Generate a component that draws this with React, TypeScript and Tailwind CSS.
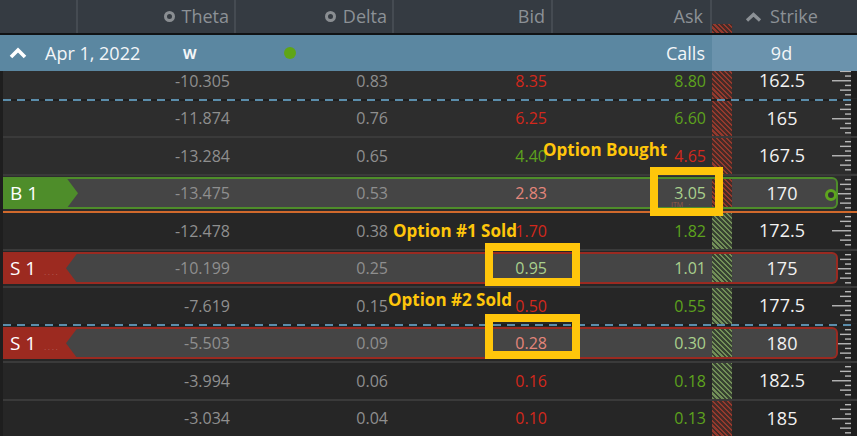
import React from "react";

type Tone = "red" | "green" | "lred" | "lgreen";

type Row = {
  theta: string;
  delta: string;
  bid: string;
  bidTone: Tone;
  ask: string;
  askTone: Tone;
  strike: string;
  hatch: "red" | "green";
  itm: boolean;
  pos?: "B" | "S";
  line?: "dash" | "orange";
};

const rows: Row[] = [
  { theta: "-10.305", delta: "0.83", bid: "8.35", bidTone: "red", ask: "8.80", askTone: "green", strike: "162.5", hatch: "red", itm: true, line: "dash" },
  { theta: "-11.874", delta: "0.76", bid: "6.25", bidTone: "red", ask: "6.60", askTone: "green", strike: "165", hatch: "red", itm: true },
  { theta: "-13.284", delta: "0.65", bid: "4.40", bidTone: "green", ask: "4.65", askTone: "red", strike: "167.5", hatch: "red", itm: true },
  { theta: "-13.475", delta: "0.53", bid: "2.83", bidTone: "lred", ask: "3.05", askTone: "lgreen", strike: "170", hatch: "red", itm: true, pos: "B", line: "orange" },
  { theta: "-12.478", delta: "0.38", bid: "1.70", bidTone: "red", ask: "1.82", askTone: "green", strike: "172.5", hatch: "green", itm: false },
  { theta: "-10.199", delta: "0.25", bid: "0.95", bidTone: "lgreen", ask: "1.01", askTone: "lgreen", strike: "175", hatch: "green", itm: false, pos: "S" },
  { theta: "-7.619", delta: "0.15", bid: "0.50", bidTone: "red", ask: "0.55", askTone: "green", strike: "177.5", hatch: "green", itm: false, line: "dash" },
  { theta: "-5.503", delta: "0.09", bid: "0.28", bidTone: "lred", ask: "0.30", askTone: "lgreen", strike: "180", hatch: "green", itm: false, pos: "S" },
  { theta: "-3.994", delta: "0.06", bid: "0.16", bidTone: "red", ask: "0.18", askTone: "green", strike: "182.5", hatch: "green", itm: false },
  { theta: "-3.034", delta: "0.04", bid: "0.10", bidTone: "red", ask: "0.13", askTone: "green", strike: "185", hatch: "red", itm: false },
];

const toneClass: Record<Tone, string> = {
  red: "text-[#d3281c]",
  green: "text-[#5da21d]",
  lred: "text-[#e4867b]",
  lgreen: "text-[#a9d08d]",
};

const hatchClass = {
  red: "bg-[image:repeating-linear-gradient(45deg,#94392d_0px,#94392d_1.5px,#452b27_1.5px,#452b27_3.5px)]",
  green: "bg-[image:repeating-linear-gradient(45deg,#728f58_0px,#728f58_1.5px,#384232_1.5px,#384232_3.5px)]",
};

const ticks = [-3, -2, -1, 0, 1, 2, 3];

const Ruler = ({ clip }: { clip?: boolean }) => {
  const w = clip ? 19 : 25;
  return (
    <svg width={w} height="35.5" viewBox={`${25 - w} 0 ${w} 35.5`} className="block shrink-0">
      {ticks.map((k) => {
        const y = 17.75 + k * 4.69;
        const x0 = k === 0 ? 0 : Math.abs(k) === 2 ? 8 : 13;
        return <rect key={k} x={x0} y={y - 0.7} width={19 - x0} height="1.4" fill="#b8b8b8" />;
      })}
      <rect x="19" y="0" width="6" height="35.5" fill="#1e1e1e" />
    </svg>
  );
};

const Num = ({ w, className, children }: { w: string; className: string; children: React.ReactNode }) => (
  <div className={`${w} flex items-center justify-end pr-[6px] text-[16px] ${className}`}>{children}</div>
);

const Cells = ({ r }: { r: Row }) => (
  <>
    <Num w="w-[158px]" className="text-[#8f8f8f]">{r.theta}</Num>
    <Num w="w-[158px]" className="text-[#8f8f8f]">{r.delta}</Num>
    <Num w="w-[159px]" className={toneClass[r.bidTone]}>{r.bid}</Num>
    <Num w="w-[159px]" className={toneClass[r.askTone]}>{r.ask}</Num>
    <div className={`w-[20px] shrink-0 ${hatchClass[r.hatch]}`} />
    <div className="w-[100px] flex items-center justify-center text-[18px] text-[#f2f2f2]">{r.strike}</div>
  </>
);

const OptionRow = ({ r }: { r: Row }) => {
  const bg = r.itm ? "bg-[#2d2d2d]" : "bg-[#262626]";
  const line =
    r.line === "dash"
      ? "bg-[image:repeating-linear-gradient(90deg,#5b8eac_0px,#5b8eac_8px,transparent_8px,transparent_14px)]"
      : r.line === "orange"
      ? "bg-[#d0692c]"
      : "bg-[#3a3a3a]";

  return (
    <div className="flex flex-col h-[37.5px]">
      {r.pos ? (
        <div className={`ml-[3px] flex items-center h-[35.5px] ${bg}`}>
          <div
            className={`flex w-[835px] h-[32px] border-y-2 border-r-2 rounded-r-[6px] bg-[#454545] ${
              r.pos === "B" ? "border-[#4e8d2a]" : "border-[#9a2a21]"
            }`}
          >
            {r.pos === "B" ? (
              <div className="w-[75px] -my-[2px] flex items-center pl-[7px] text-[19px] text-white bg-[#4e8d2a] [clip-path:polygon(0_0,calc(100%-12px)_0,100%_50%,calc(100%-12px)_100%,0_100%)]">
                B 1
              </div>
            ) : (
              <div className="w-[75px] -my-[2px] flex items-center pl-[7px] text-[19px] text-white bg-[#9c2a20] [clip-path:polygon(0_0,100%_0,calc(100%-12px)_50%,100%_100%,0_100%)]">
                S 1
                <span className="ml-[8px] mt-[10px] text-[7px] tracking-[2px] text-[#b86a60]">....</span>
              </div>
            )}
            <Cells r={r} />
            <div className="flex-1" />
          </div>
          <Ruler clip />
        </div>
      ) : (
        <div className={`ml-[3px] flex h-[35.5px] ${bg}`}>
          <div className="w-[75px]" />
          <Cells r={r} />
          <Ruler />
        </div>
      )}
      <div className={`h-[2px] ml-[3px] ${line}`} />
    </div>
  );
};

const Ring = () => <span className="w-[11px] h-[11px] rounded-full border-[3px] border-[#8a8e92] mr-[7px]" />;

export default function App() {
  return (
    <div className="relative w-[857px] h-[436px] overflow-hidden bg-[#1e1e1e] font-['Open_Sans',sans-serif]">
      {/* column header */}
      <div className="flex h-[35px] bg-[#353b42] border-b-2 border-[#101214] text-[18px] text-[#8c9196]">
        <div className="w-[78px] border-r-2 border-[#454b52]" />
        <div className="w-[158px] border-r-2 border-[#454b52] flex items-center justify-end pr-[5px]">
          <Ring />
          Theta
        </div>
        <div className="w-[158px] border-r-2 border-[#454b52] flex items-center justify-end pr-[5px]">
          <Ring />
          Delta
        </div>
        <div className="w-[159px] border-r-2 border-[#454b52] flex items-center justify-end pr-[6px]">Bid</div>
        <div className="w-[159px] border-r-2 border-[#454b52] flex items-center justify-end pr-[7px]">Ask</div>
        <div className="relative flex-1 flex items-center justify-center pr-[6px]">
          <div className={`absolute left-0 bottom-0 w-[20px] h-[9px] ${hatchClass.red}`} />
          <svg width="17" height="10" viewBox="0 0 17 10" className="mr-[8px]">
            <path d="M2 8.5 L8.5 2.5 L15 8.5" fill="none" stroke="#8c9196" strokeWidth="3.2" />
          </svg>
          Strike
        </div>
      </div>

      {/* expiration bar */}
      <div className="flex h-[36px] text-[18px] text-[#f3f6f8]">
        <div className="w-[712px] flex items-center bg-[#5b87a1]">
          <div className="w-[45px] pl-[9px]">
            <svg width="18" height="12" viewBox="0 0 18 12" className="block">
              <path d="M2 10 L9 3 L16 10" fill="none" stroke="#ffffff" strokeWidth="3.6" />
            </svg>
          </div>
          <div className="w-[138px]">Apr 1, 2022</div>
          <div className="w-[101px] text-[14px] font-bold">W</div>
          <span className="w-[12px] h-[12px] rounded-full bg-[#5fa516]" />
          <div className="flex-1 text-right pr-[7px]">Calls</div>
        </div>
        <div className="flex-1 flex items-center justify-center pr-[6px] bg-[#6b93ad]">9d</div>
      </div>

      {/* chain rows */}
      <div className="h-[365px] overflow-hidden">
        <div className="-mt-[8px]">
          {rows.map((r) => (
            <OptionRow key={r.strike} r={r} />
          ))}
        </div>
      </div>

      {/* position marker on bought row */}
      <span className="absolute left-[825px] top-[189px] w-[12px] h-[12px] rounded-full border-[3px] border-[#5ea51e] bg-[#333333]" />
      <span className="absolute left-[671px] top-[200px] text-[7px] text-[#9a5a48]">ITM &nbsp;&nbsp;·</span>

      {/* annotations */}
      <div className="absolute left-[543px] top-[141px] text-[17px] leading-none font-bold text-[#ffc60b] whitespace-nowrap">
        Option Bought
      </div>
      <div className="absolute left-[393px] top-[222px] text-[17px] leading-none font-bold text-[#ffc60b] whitespace-nowrap">
        Option #1 Sold
      </div>
      <div className="absolute left-[388px] top-[291px] text-[17px] leading-none font-bold text-[#ffc60b] whitespace-nowrap">
        Option #2 Sold
      </div>
      <div className="absolute left-[650px] top-[167px] w-[73px] h-[49px] border-[8px] border-[#ffc60b]" />
      <div className="absolute left-[485px] top-[243px] w-[95px] h-[43px] border-[8px] border-[#ffc60b]" />
      <div className="absolute left-[485px] top-[314px] w-[95px] h-[45px] border-[8px] border-[#ffc60b]" />
    </div>
  );
}
